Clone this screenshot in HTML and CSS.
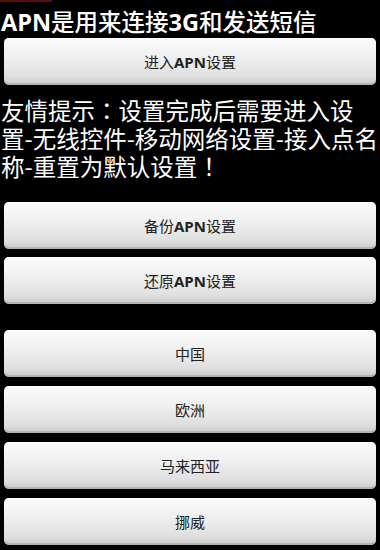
FILE: index.html
```html
<!DOCTYPE html>
<html lang="zh-CN">
<head>
<meta charset="utf-8">
<title>APN</title>
<link rel="stylesheet" href="styles.css">
</head>
<body>
<div class="screen">
  <div class="statusbar"></div>
  <div class="title"><b>APN</b>是用来连接<b>3G</b>和发送短信</div>
  <div class="btn first">进入<b>APN</b> 设置</div>
  <div class="tip">
    <div class="tip-line">友情提示<span class="punct" lang="ja">：</span>设置完成后需要进入设</div>
    <div class="tip-line">置-无线控件-移动网络设置-接入点名</div>
    <div class="tip-line">称-重置为默认设置<span class="punct" lang="ja">！</span></div>
  </div>
  <div class="btn backup">备份<b>APN</b>设置</div>
  <div class="btn">还原<b>APN</b>设置</div>
  <div class="btn region-first">中国</div>
  <div class="btn region">欧洲</div>
  <div class="btn region">马来西亚</div>
  <div class="btn region">挪威</div>
</div>
</body>
</html>
```
FILE: styles.css
```css
html, body {
  margin: 0;
  padding: 0;
  background: #000;
}
.screen {
  width: 380px;
  height: 550px;
  display: flex;
  flex-direction: column;
  font-family: "Noto Sans CJK SC", "Open Sans", sans-serif;
  overflow: hidden;
}
.screen b {
  font-family: "Open Sans", "Noto Sans CJK SC", sans-serif;
  font-weight: 700;
}
.statusbar {
  width: 52px;
  height: 2px;
  background: #5e0c0c;
}
.title {
  margin-top: 4px;
  padding-left: 1px;
  color: #fff;
  font-size: 23.5px;
  line-height: 30px;
  height: 30px;
  white-space: nowrap;
  font-weight: 500;
}
.btn {
  margin: 8px 4px 0;
  height: 47px;
  flex: none;
  box-sizing: border-box;
  border-radius: 5px;
  background: linear-gradient(to bottom, #fbfbfb 0%, #f0f0f0 40%, #e0e0e0 80%, #cccccc 100%);
  box-shadow: inset 0 -2px 0 #b4b4b4, inset 0 1px 0 #ffffff;
  display: flex;
  align-items: center;
  justify-content: center;
  color: #222;
  font-size: 15px;
  white-space: nowrap;
}
.btn.first {
  margin-top: 2px;
}
.tip {
  margin-top: 11px;
  padding-left: 1px;
  color: #fff;
  font-size: 23.5px;
  white-space: nowrap;
}
.tip-line {
  height: 28px;
  line-height: 28px;
}
.punct {
  font-family: "Noto Sans CJK JP", "Noto Sans CJK SC", sans-serif;
}
.btn.backup {
  margin-top: 22px;
}
.btn.region-first {
  margin-top: 26px;
}
.btn.region {
  margin-top: 9px;
}
```
